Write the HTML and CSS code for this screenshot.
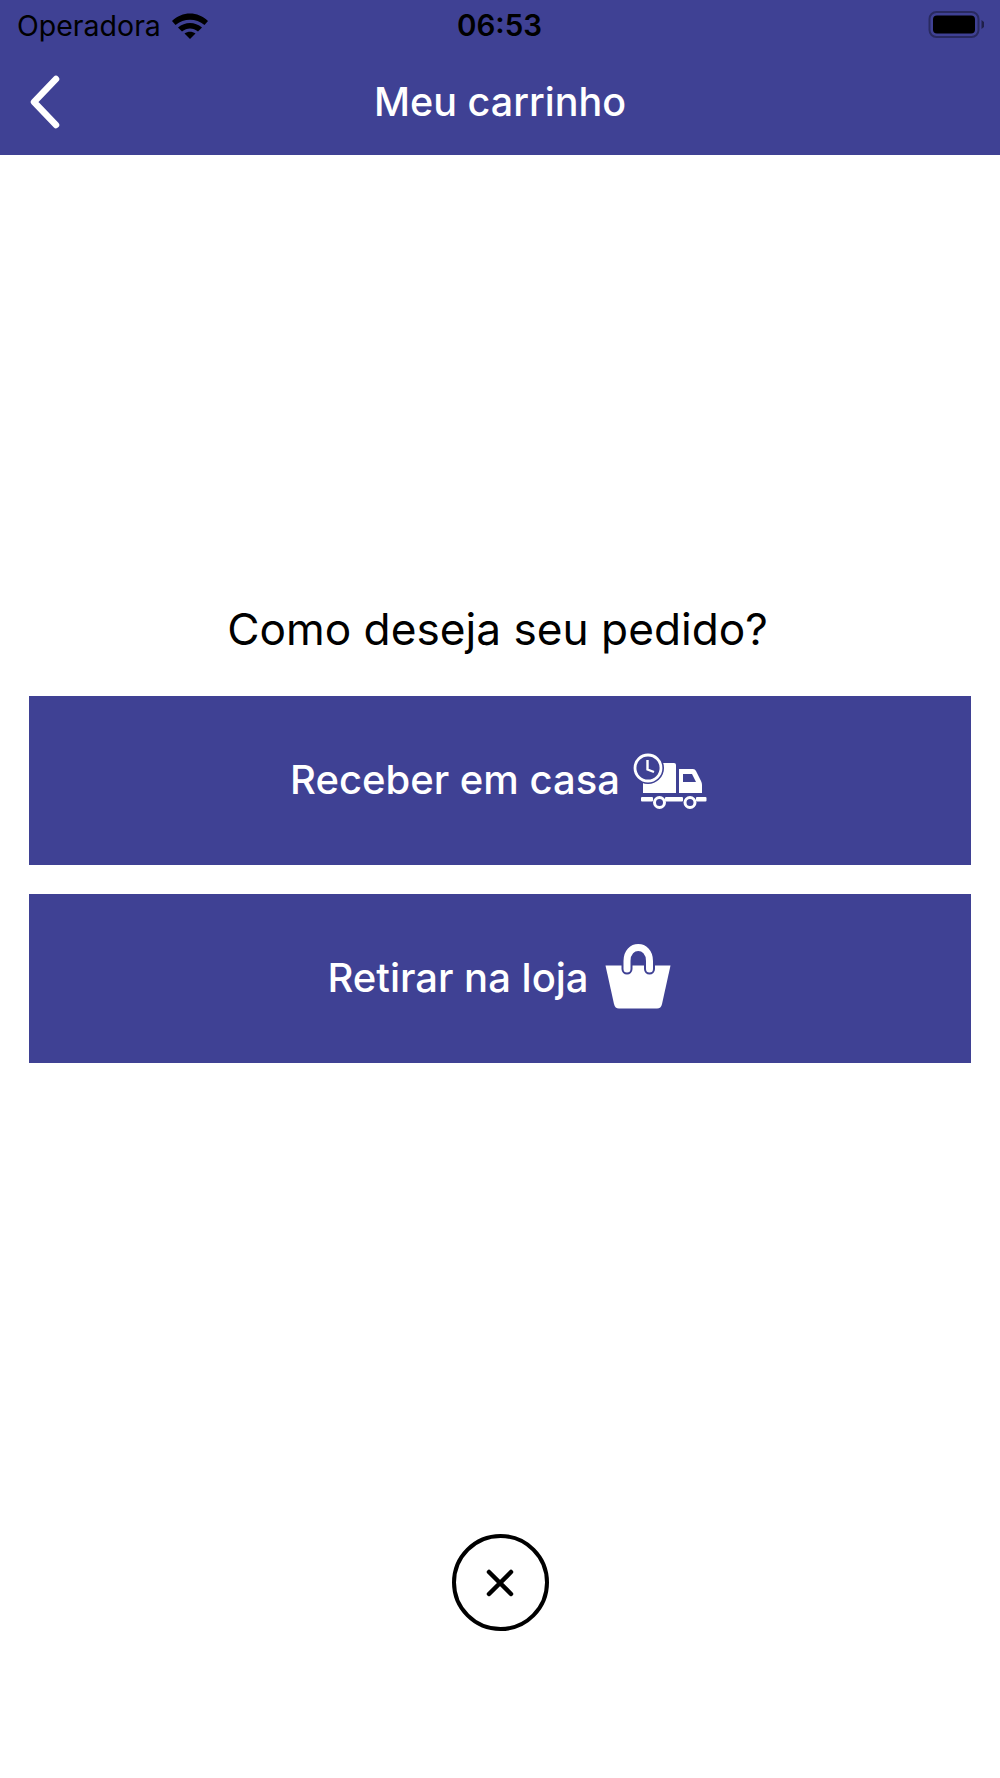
FILE: index.html
```html
<!DOCTYPE html>
<html lang="pt-BR">
<head>
    <meta charset="UTF-8">
    <meta name="viewport" content="width=device-width, initial-scale=1.0">
    <title>Meu carrinho</title>
    <link rel="stylesheet" href="styles.css">
</head>
<body>
    <div class="app">
        <header class="top">
            <div class="status-bar">
                <div class="status-left">
                    <span class="carrier">Operadora</span>
                    <svg class="wifi" width="38" height="28" viewBox="0 0 38 28">
                        <path d="M1 10 C11 0 27 0 37 10 L33.500 14 C25 7 13 7 4.500 14 Z" fill="#000"/>
                        <path d="M7 16.500 C14 10.500 24 10.500 31 16.500 L27 20.500 C22 16.500 16 16.500 11 20.500 Z" fill="#000"/>
                        <path d="M13.500 22.500 C17 20 21 20 24.500 22.500 L19 28 Z" fill="#000"/>
                    </svg>
                </div>
                <span class="clock">06:53</span>
                <svg class="battery" width="60" height="30" viewBox="0 0 60 30">
                    <rect x="1.500" y="2" width="49" height="25" rx="7" fill="none" stroke="#000" stroke-opacity="0.35" stroke-width="2"/>
                    <rect x="5" y="5.500" width="42" height="18" rx="4" fill="#000"/>
                    <path d="M53.500 10 L56 12 V17 L53.500 19 Z" fill="#000" fill-opacity="0.5"/>
                </svg>
            </div>
            <nav class="nav-bar">
                <svg class="back" width="36" height="54" viewBox="0 0 36 54">
                    <path d="M30 4 L8 27 L30 50" fill="none" stroke="#fff" stroke-width="6.500" stroke-linecap="round" stroke-linejoin="round"/>
                </svg>
                <h1 class="nav-title">Meu carrinho</h1>
            </nav>
        </header>

        <main class="content">
            <h2 class="question">Como deseja seu pedido?</h2>
            <button class="option-btn">
                Receber em casa
                <svg class="truck-icon" width="74" height="56" viewBox="24 22 74 56">
                    <path d="M34 32 H65 Q67 32 67 34 V62 H34 Z" fill="#fff"/>
                    <circle cx="39" cy="37" r="16" fill="#3f4194"/>
                    <circle cx="39" cy="37" r="13" fill="#3f4194" stroke="#fff" stroke-width="2.800"/>
                    <path d="M38.500 29 V38.500 L45 41" fill="none" stroke="#fff" stroke-width="2.400"/>
                    <path d="M70 38 H84 Q86 38 87 40 L92 50 Q93 52 93 54 V62 H70 Z" fill="#fff"/>
                    <path d="M74 43 H83 L87 51 H74 Z" fill="#3f4194"/>
                    <rect x="32" y="66" width="12" height="4.500" rx="1" fill="#fff"/>
                    <rect x="56" y="66" width="18" height="4.500" rx="1" fill="#fff"/>
                    <rect x="87" y="66" width="10.500" height="4.500" rx="1" fill="#fff"/>
                    <circle cx="50.500" cy="71.500" r="5" fill="#3f4194" stroke="#fff" stroke-width="3"/>
                    <circle cx="81" cy="71.500" r="5" fill="#3f4194" stroke="#fff" stroke-width="3"/>
                </svg>
            </button>
            <button class="option-btn">
                Retirar na loja
                <svg class="bag-icon" width="68" height="68" viewBox="14 14 68 68">
                    <path d="M15.500 36.500 H80.500 L72 75 Q71 79.500 67 79.500 H29 Q25 79.500 24 75 Z" fill="#fff"/>
                    <path d="M37 40 V32 C37 14 59.500 14 59.500 32 V40" fill="none" stroke="#3f4194" stroke-width="11" stroke-linecap="round"/>
                    <path d="M37 40 V32 C37 14 59.500 14 59.500 32 V40" fill="none" stroke="#fff" stroke-width="7" stroke-linecap="round"/>
                </svg>
            </button>
        </main>

        <button class="close-btn" aria-label="Fechar">
            <svg width="28" height="28" viewBox="0 0 28 28">
                <path d="M3 3 L25 25 M25 3 L3 25" fill="none" stroke="#000" stroke-width="4.500" stroke-linecap="round"/>
            </svg>
        </button>
    </div>
</body>
</html>
```

FILE: styles.css
```css
* {
    box-sizing: border-box;
}
body {
    margin: 0;
    background-color: #fff;
    font-family: 'Inter', 'Liberation Sans', sans-serif;
}
.app {
    display: flex;
    flex-direction: column;
    align-items: center;
    min-height: 1778px;
}
.top {
    width: 100%;
    height: 155px;
    background-color: #3f4194;
}
.status-bar {
    display: grid;
    grid-template-columns: 1fr auto 1fr;
    align-items: center;
    height: 50px;
    padding: 0 12px 0 17px;
    color: #000;
}
.status-left {
    display: flex;
    align-items: center;
    gap: 10px;
}
.carrier {
    font-size: 28.500px;
}
.clock {
    margin-right: 6px;
    font-size: 29.500px;
    font-weight: 600;
}
.battery {
    justify-self: end;
}
.nav-bar {
    position: relative;
    display: flex;
    align-items: center;
    justify-content: center;
    height: 105px;
    padding-bottom: 2px;
}
.back {
    position: absolute;
    left: 26px;
    top: 25px;
}
.nav-title {
    margin: 0;
    color: #fff;
    font-size: 39.500px;
    font-weight: 500;
}
.content {
    display: flex;
    flex-direction: column;
    width: 100%;
    padding: 447px 29px 0;
    gap: 29px;
}
.question {
    margin: 0 0 11px;
    padding-right: 5px;
    font-size: 44.200px;
    font-weight: 400;
    line-height: 54px;
    text-align: center;
    color: #000;
}
.option-btn {
    display: flex;
    align-items: center;
    justify-content: center;
    gap: 12px;
    height: 169px;
    padding: 0 4px 3px 0;
    border: none;
    background-color: #3f4194;
    color: #fff;
    font-family: inherit;
    font-size: 40px;
    font-weight: 500;
}
.truck-icon {
    margin: 3px -1px 0 1px;
}
.bag-icon {
    margin: 0 -3px 0 3px;
}
.close-btn {
    display: flex;
    align-items: center;
    justify-content: center;
    width: 97px;
    height: 97px;
    margin-top: 471px;
    padding: 0;
    border: 4.500px solid #000;
    border-radius: 50%;
    background: none;
}
```
